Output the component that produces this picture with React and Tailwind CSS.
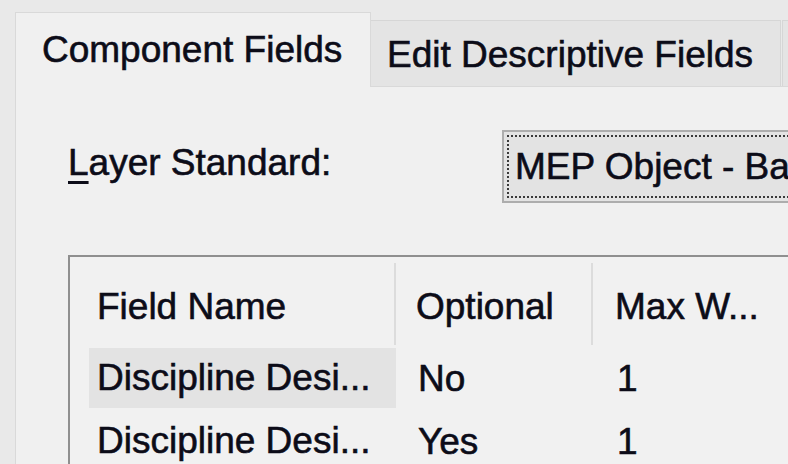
export default function App() {
    const rows = [
        { name: "Discipline Desi...", optional: "No", max: "1", selected: true },
        { name: "Discipline Desi...", optional: "Yes", max: "1", selected: false },
    ];

    return (
        <div className="w-[788px] h-[464px] overflow-hidden bg-[#e9e9e9] font-['Liberation_Sans',Arial,sans-serif] text-[37px] leading-[42px] text-[#0c0c18] [-webkit-text-stroke:0.6px_#0c0c18] flex flex-col">
            {/* tab strip */}
            <div className="flex items-end h-[86px] pl-[15px] shrink-0 whitespace-nowrap">
                <div className="relative z-10 -mb-px h-[75px] w-[356px] shrink-0 bg-[#f0f0f0] border border-b-0 border-[#d9d9d9] pl-[26px] pt-[16px]">
                    Component Fields
                </div>
                <div className="h-[66px] w-[410px] shrink-0 bg-[#e4e4e4] border-t border-r border-[#d6d6d6] pl-[16px] pt-[13px]">
                    Edit Descriptive Fields
                </div>
                <div className="h-[66px] w-[60px] shrink-0 ml-px bg-[#e4e4e4] border-t border-l border-[#d6d6d6]" />
            </div>

            {/* tab page */}
            <div className="flex-1 ml-[15px] w-[900px] bg-[#f0f0f0] border-t border-l border-[#d9d9d9] pl-[52px]">
                <div className="flex items-start mt-[43px] h-[73px] whitespace-nowrap">
                    <div className="w-[434px] shrink-0 mt-[12px]">
                        <span className="underline underline-offset-[6px] decoration-[3px]">L</span>ayer Standard:
                    </div>
                    <div className="w-[420px] h-[73px] shrink-0 border-2 border-[#adadad] bg-[#e3e3e3] p-[3px]">
                        <div className="h-full border-2 border-dotted border-[#3a3a3a] pl-[6px] pt-[9px]">
                            MEP Object - Basic
                        </div>
                    </div>
                </div>

                {/* list view */}
                <div className="mt-[52px] w-[900px] h-[300px] border-t-2 border-l-2 border-[#8f8f8f] bg-[#f1f1f1] whitespace-nowrap">
                    <div className="flex h-[90px]">
                        <div className="w-[326px] h-[82px] mt-[6px] shrink-0 border-r-2 border-[#dcdcdc] pl-[27px] pt-[23px]">
                            Field Name
                        </div>
                        <div className="w-[197px] h-[82px] mt-[6px] shrink-0 border-r-2 border-[#dcdcdc] pl-[20px] pt-[23px]">
                            Optional
                        </div>
                        <div className="h-[82px] mt-[6px] pl-[22px] pt-[23px]">Max W...</div>
                    </div>
                    {rows.map((r, i) => (
                        <div key={i} className="flex h-[63px]">
                            <div className="w-[326px] shrink-0 pl-[19px] pt-px">
                                <div className={`h-[60px] flex items-center pl-[8px] ${r.selected ? "bg-[#e3e3e3]" : ""}`}>
                                    {r.name}
                                </div>
                            </div>
                            <div className="w-[197px] shrink-0 pl-[22px] flex items-center">{r.optional}</div>
                            <div className="pl-[24px] flex items-center">{r.max}</div>
                        </div>
                    ))}
                </div>
            </div>
        </div>
    );
}
